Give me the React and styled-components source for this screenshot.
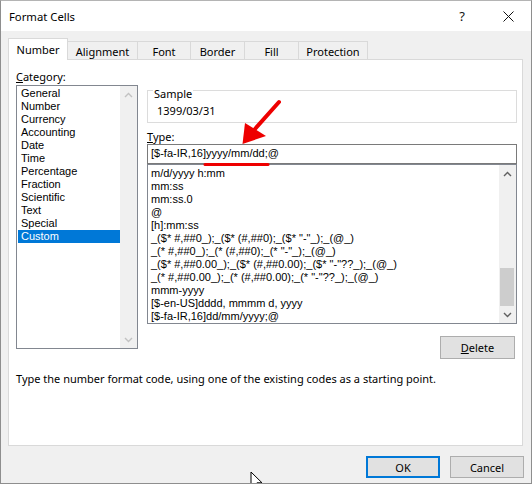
import React from 'react';
import styled, { createGlobalStyle } from 'styled-components';

const GlobalStyle = createGlobalStyle`
  html, body {
    margin: 0;
    padding: 0;
    background: #ffffff;
  }
  body {
    font-family: "Noto Sans", "Open Sans", sans-serif;
    font-size: 11px;
    color: #000;
  }
  * {
    box-sizing: border-box;
  }
`;

const Dialog = styled.div`
  position: relative;
  width: 532px;
  height: 484px;
  display: flex;
  flex-direction: column;
  background: #f0f0f0;
  border: 1px solid #8e8e8e;
  border-top-color: #b4b4b4;
  overflow: hidden;
`;

const TitleBar = styled.div`
  height: 30px;
  display: flex;
  align-items: center;
  background: #ffffff;
  padding-left: 8px;
`;

const Title = styled.div`
  flex: 1;
  font-size: 11.3px;
  padding-top: 1px;
`;

const CaptionButton = styled.div`
  width: 46px;
  height: 30px;
  display: flex;
  align-items: center;
  justify-content: center;
  font-size: 13px;
  color: #111;
`;

const Body = styled.div`
  flex: 1;
  display: flex;
  flex-direction: column;
  padding: 7px 8px 0 7px;
`;

const TabStrip = styled.div`
  height: 21px;
  display: flex;
  align-items: flex-end;
`;

const Tab = styled.div`
  position: relative;
  width: ${(p) => p.$w}px;
  height: ${(p) => (p.$active ? 22 : 18)}px;
  margin-bottom: ${(p) => (p.$active ? -1 : 0)}px;
  margin-left: ${(p) => (p.$first ? 0 : -1)}px;
  z-index: ${(p) => (p.$active ? 1 : 0)};
  display: flex;
  align-items: center;
  justify-content: center;
  padding-top: ${(p) => (p.$active ? 0 : 2)}px;
  background: ${(p) => (p.$active ? '#ffffff' : '#f0f0f0')};
  border: 1px solid #d9d9d9;
  border-bottom: none;
`;

const Panel = styled.div`
  height: 387px;
  display: flex;
  flex-direction: column;
  background: #ffffff;
  border: 1px solid #d9d9d9;
  padding: 9px 5px 0 7px;
`;

const TopRow = styled.div`
  display: flex;
  align-items: flex-start;
  gap: 9px;
`;

const LeftColumn = styled.div`
  width: 122px;
  display: flex;
  flex-direction: column;
`;

const RightColumn = styled.div`
  width: 370px;
  display: flex;
  flex-direction: column;
  margin-top: 21px;
`;

const Label = styled.div`
  height: ${(p) => p.$h || 15}px;
  line-height: 15px;
  margin-top: ${(p) => p.$mt || 0}px;
`;

const ListBox = styled.div`
  height: ${(p) => p.$h}px;
  display: flex;
  border: 1px solid ${(p) => p.$border || '#828790'};
  background: #ffffff;
`;

const Items = styled.div`
  flex: 1;
  min-width: 0;
  padding-top: ${(p) => p.$pt || 1}px;
  overflow: hidden;
`;

const Item = styled.div`
  height: 13px;
  line-height: 13px;
  margin-left: 1px;
  padding-left: ${(p) => p.$pl || 3}px;
  white-space: nowrap;
  font-family: "Liberation Sans", Arial, sans-serif;
  font-size: 11px;
  background: ${(p) => (p.$selected ? '#0078d7' : 'transparent')};
  color: ${(p) => (p.$selected ? '#ffffff' : '#000')};
`;

const ScrollBar = styled.div`
  width: 17px;
  display: flex;
  flex-direction: column;
  background: #f0f0f0;
`;

const ScrollArrow = styled.div`
  height: 17px;
  display: flex;
  align-items: center;
  justify-content: center;
`;

const ScrollTrack = styled.div`
  flex: 1;
  display: flex;
  flex-direction: column;
  justify-content: flex-end;
`;

const Thumb = styled.div`
  height: 38px;
  margin: 0 2px 0 1px;
  background: #cdcdcd;
`;

const GroupBox = styled.div`
  position: relative;
  height: 33px;
  border: 1px solid #dcdcdc;
  padding: 12px 0 0 9px;
  line-height: 15px;
`;

const Legend = styled.span`
  position: absolute;
  top: -5px;
  left: 5px;
  padding: 0 1px;
  line-height: 15px;
  background: #ffffff;
`;

const TextInput = styled.div`
  height: 20px;
  border: 1px solid #7a7a7a;
  padding-left: 3px;
  line-height: 17px;
  white-space: nowrap;
  font-family: "Liberation Sans", Arial, sans-serif;
  font-size: 11px;
`;

const Button = styled.div`
  width: ${(p) => p.$w || 74}px;
  height: ${(p) => p.$h || 22}px;
  display: flex;
  align-items: center;
  justify-content: center;
  background: #e1e1e1;
  border: ${(p) => (p.$default ? '2px solid #0078d7' : '1px solid #adadad')};
`;

const DeleteButton = styled(Button)`
  align-self: flex-end;
  margin-top: 12px;
  margin-right: 2px;
`;

const Description = styled.div`
  margin-top: 12px;
  line-height: 15px;
`;

const Footer = styled.div`
  display: flex;
  justify-content: flex-end;
  gap: 10px;
  margin-top: 10px;
  margin-right: -1px;
`;

const Annotation = styled.svg`
  position: absolute;
  left: 200px;
  top: 96px;
  pointer-events: none;
`;

const Cursor = styled.svg`
  position: absolute;
  left: 249px;
  top: 470px;
`;

const Chevron = ({ up, color }) => (
  <svg width="9" height="6" viewBox="0 0 9 6">
    <path
      d={up ? 'M1 5 L4.5 1.5 L8 5' : 'M1 1 L4.5 4.5 L8 1'}
      fill="none"
      stroke={color}
      strokeWidth="1.4"
    />
  </svg>
);

const categories = [
  'General',
  'Number',
  'Currency',
  'Accounting',
  'Date',
  'Time',
  'Percentage',
  'Fraction',
  'Scientific',
  'Text',
  'Special',
  'Custom',
];

const formats = [
  'm/d/yyyy h:mm',
  'mm:ss',
  'mm:ss.0',
  '@',
  '[h]:mm:ss',
  '_($* #,##0_);_($* (#,##0);_($* "-"_);_(@_)',
  '_(* #,##0_);_(* (#,##0);_(* "-"_);_(@_)',
  '_($* #,##0.00_);_($* (#,##0.00);_($* "-"??_);_(@_)',
  '_(* #,##0.00_);_(* (#,##0.00);_(* "-"??_);_(@_)',
  'mmm-yyyy',
  '[$-en-US]dddd, mmmm d, yyyy',
  '[$-fa-IR,16]dd/mm/yyyy;@',
];

const tabs = [
  { name: 'Number', w: 60 },
  { name: 'Alignment', w: 71 },
  { name: 'Font', w: 54 },
  { name: 'Border', w: 55 },
  { name: 'Fill', w: 55 },
  { name: 'Protection', w: 70 },
];

export default function App() {
  return (
    <>
      <GlobalStyle />
      <Dialog>
        <TitleBar>
          <Title>Format Cells</Title>
          <CaptionButton>?</CaptionButton>
          <CaptionButton>
            <svg width="11" height="11" viewBox="0 0 11 11">
              <path d="M0.5 0.5 L10.5 10.5 M10.5 0.5 L0.5 10.5" stroke="#111" strokeWidth="1" />
            </svg>
          </CaptionButton>
        </TitleBar>
        <Body>
          <TabStrip>
            {tabs.map((t, i) => (
              <Tab key={t.name} $w={t.w} $first={i === 0} $active={i === 0}>
                {t.name}
              </Tab>
            ))}
          </TabStrip>
          <Panel>
            <TopRow>
              <LeftColumn>
                <Label $h={16}>
                  <u>C</u>ategory:
                </Label>
                <ListBox $h={264}>
                  <Items $pt={1}>
                    {categories.map((c) => (
                      <Item key={c} $selected={c === 'Custom'}>
                        {c}
                      </Item>
                    ))}
                  </Items>
                  <ScrollBar>
                    <ScrollArrow>
                      <Chevron up color="#c2c2c2" />
                    </ScrollArrow>
                    <ScrollTrack />
                    <ScrollArrow>
                      <Chevron color="#c2c2c2" />
                    </ScrollArrow>
                  </ScrollBar>
                </ListBox>
              </LeftColumn>
              <RightColumn>
                <GroupBox>
                  <Legend>Sample</Legend>
                  1399/03/31
                </GroupBox>
                <Label $mt={6}>
                  <u>T</u>ype:
                </Label>
                <TextInput>[$-fa-IR,16]yyyy/mm/dd;@</TextInput>
                <ListBox $h={160}>
                  <Items $pt={2}>
                    {formats.map((f) => (
                      <Item key={f} $pl={2}>
                        {f}
                      </Item>
                    ))}
                  </Items>
                  <ScrollBar>
                    <ScrollArrow>
                      <Chevron up color="#606060" />
                    </ScrollArrow>
                    <ScrollTrack>
                      <Thumb />
                    </ScrollTrack>
                    <ScrollArrow>
                      <Chevron color="#606060" />
                    </ScrollArrow>
                  </ScrollBar>
                </ListBox>
                <DeleteButton $w={75} $h={23}>
                  <u>D</u>elete
                </DeleteButton>
              </RightColumn>
            </TopRow>
            <Description>
              Type the number format code, using one of the existing codes as a starting point.
            </Description>
          </Panel>
          <Footer>
            <Button $default>OK</Button>
            <Button>Cancel</Button>
          </Footer>
        </Body>

        <Annotation width="85" height="72" viewBox="200 96 85 72">
          <line x1="278" y1="101" x2="254" y2="128" stroke="#ee0000" strokeWidth="4" strokeLinecap="round" />
          <polygon points="241.5,143 244,122 265,135" fill="#ee0000" />
          <line x1="204" y1="163.5" x2="267" y2="163.5" stroke="#ee0000" strokeWidth="3" strokeLinecap="round" />
        </Annotation>

        <Cursor width="14" height="20" viewBox="0 0 14 20">
          <path
            d="M1 1 L1 16 L4.6 12.6 L7 18.2 L9.3 17.2 L7 11.8 L12 11.8 Z"
            fill="#ffffff"
            stroke="#000"
            strokeWidth="1"
            strokeLinejoin="miter"
          />
        </Cursor>
      </Dialog>
    </>
  );
}
